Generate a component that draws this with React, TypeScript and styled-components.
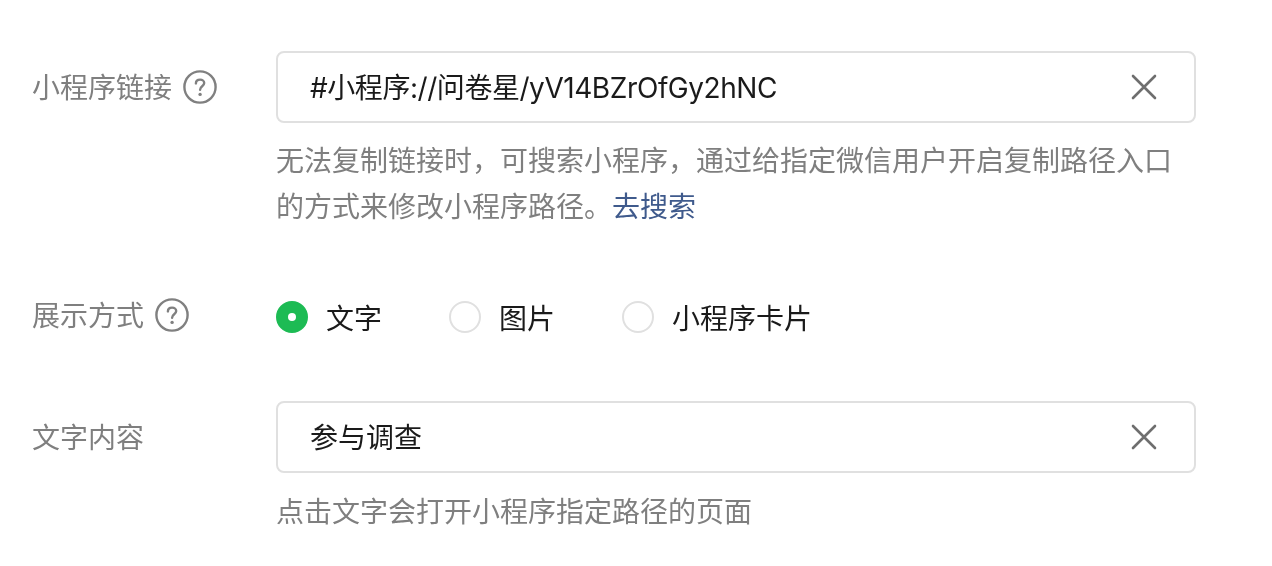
import React from "react";
import styled, { createGlobalStyle } from "styled-components";

const GlobalStyle = createGlobalStyle`
  html, body {
    margin: 0;
    padding: 0;
    background: #fff;
    font-family: Inter, "Noto Sans CJK SC", sans-serif;
  }
`;

const Form = styled.div`
  width: 1272px;
  height: 566px;
  box-sizing: border-box;
  padding: 51px 76px 0 32px;
  overflow: hidden;
  will-change: transform;
`;

const Row = styled.div<{ $gap?: number }>`
  display: flex;
  align-items: flex-start;
  margin-bottom: ${(props) => props.$gap ?? 0}px;
`;

const Label = styled.div<{ $height: number }>`
  width: 244px;
  flex-shrink: 0;
  height: ${(props) => props.$height}px;
  display: flex;
  align-items: center;
  gap: 11px;
  font-size: 28px;
  color: #7f7f7f;
`;

const LabelText = styled.span`
  margin-top: -2px;
`;

const HelpIcon = styled.svg`
  width: 34px;
  height: 34px;
  flex-shrink: 0;
`;

const Control = styled.div`
  flex: 1;
  min-width: 0;
`;

const InputBox = styled.div`
  height: 72px;
  box-sizing: border-box;
  border: 2px solid #e0e0e0;
  border-radius: 8px;
  padding: 0 32px;
  display: flex;
  align-items: center;
  justify-content: space-between;
  font-size: 28px;
  color: #1a1a1a;
`;

const InputText = styled.span<{ $tight?: boolean }>`
  margin-top: -2px;
  letter-spacing: ${(props) => (props.$tight ? "-0.45px" : "0")};
`;

const ClearIcon = styled.svg`
  width: 28px;
  height: 28px;
  flex-shrink: 0;
  margin-right: 4px;
`;

const Hint = styled.p<{ $top?: number }>`
  margin: ${(props) => props.$top ?? 15}px 0 0;
  font-size: 28px;
  line-height: 46px;
  color: #7f7f7f;

  a {
    color: #3f5a8c;
    text-decoration: none;
  }
`;

const RadioGroup = styled.div`
  height: 60px;
  display: flex;
  align-items: center;
  gap: 67px;
`;

const RadioItem = styled.label`
  display: flex;
  align-items: center;
  gap: 18px;
  font-size: 28px;
  color: #1a1a1a;
`;

const RadioDot = styled.span<{ $checked?: boolean }>`
  width: 32px;
  height: 32px;
  box-sizing: border-box;
  border-radius: 50%;
  display: flex;
  align-items: center;
  justify-content: center;
  border: 2px solid ${(props) => (props.$checked ? "#1dbb54" : "#e0e0e0")};
  background: ${(props) => (props.$checked ? "#1dbb54" : "#fff")};

  &::after {
    content: "";
    display: ${(props) => (props.$checked ? "block" : "none")};
    width: 8px;
    height: 8px;
    border-radius: 50%;
    background: #fff;
  }
`;

const Help = () => (
  <HelpIcon viewBox="0 0 34 34" fill="none">
    <circle cx="17" cy="17" r="15.6" stroke="#808080" strokeWidth="2.4" />
    <path
      d="M12.9 13.4c0-2.4 1.9-3.8 4.2-3.8s4.1 1.4 4.1 3.5c0 3.2-4.1 3.2-4.1 6.6"
      stroke="#808080"
      strokeWidth="2.4"
      strokeLinecap="round"
    />
    <circle cx="17.1" cy="24.4" r="1.7" fill="#808080" />
  </HelpIcon>
);

const Clear = () => (
  <ClearIcon viewBox="0 0 28 28" fill="none">
    <path d="M3 3l22 22M25 3L3 25" stroke="#6e6e6e" strokeWidth="2.6" strokeLinecap="round" />
  </ClearIcon>
);

const radios = [
  { label: "文字", checked: true },
  { label: "图片", checked: false },
  { label: "小程序卡片", checked: false },
];

export default function App() {
  return (
    <Form>
      <GlobalStyle />
      <Row $gap={57}>
        <Label $height={72}>
          <LabelText>小程序链接</LabelText>
          <Help />
        </Label>
        <Control>
          <InputBox>
            <InputText $tight>#小程序://问卷星/yV14BZrOfGy2hNC</InputText>
            <Clear />
          </InputBox>
          <Hint>
            无法复制链接时，可搜索小程序，通过给指定微信用户开启复制路径入口的方式来修改小程序路径。
            <a href="#">去搜索</a>
          </Hint>
        </Control>
      </Row>
      <Row $gap={54}>
        <Label $height={56}>
          <LabelText>展示方式</LabelText>
          <Help />
        </Label>
        <Control>
          <RadioGroup>
            {radios.map((radio) => (
              <RadioItem key={radio.label}>
                <RadioDot $checked={radio.checked} />
                {radio.label}
              </RadioItem>
            ))}
          </RadioGroup>
        </Control>
      </Row>
      <Row>
        <Label $height={72}>
          <LabelText>文字内容</LabelText>
        </Label>
        <Control>
          <InputBox>
            <InputText>参与调查</InputText>
            <Clear />
          </InputBox>
          <Hint $top={16}>点击文字会打开小程序指定路径的页面</Hint>
        </Control>
      </Row>
    </Form>
  );
}
